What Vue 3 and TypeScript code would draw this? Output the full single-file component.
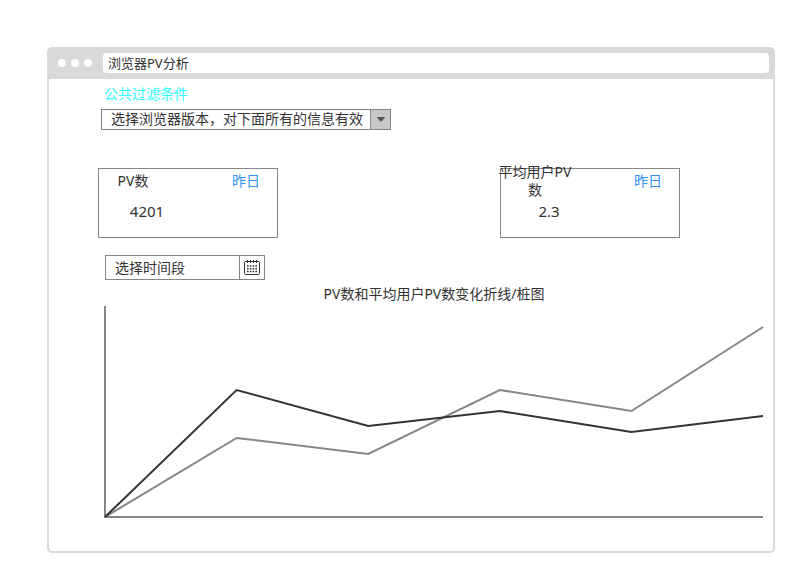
<script setup lang="ts">
import { computed, ref } from 'vue'

interface Metric {
  title: string
  value: string
}

const version = ref('all')
const period = ref('选择时间段')

const metrics: Metric[] = [
  { title: 'PV数', value: '4201' },
  { title: '平均用户PV数', value: '2.3' },
]

const chartWidth = 660
const chartHeight = 212
const baseline = 211

const totalSeries = [0, 127, 91, 106, 85, 101]
const averageSeries = [0, 79, 63, 127, 106, 190]

function toPoints(values: number[]): string {
  const step = (chartWidth - 2) / (values.length - 1)
  return values.map((value, index) => `${1 + index * step},${baseline - value}`).join(' ')
}

const totalPoints = computed(() => toPoints(totalSeries))
const averagePoints = computed(() => toPoints(averageSeries))
</script>

<template>
  <div class="window">
    <header class="bar">
      <span class="dots"><i></i><i></i><i></i></span>
      <h1 class="address">浏览器PV分析</h1>
    </header>

    <main class="content">
      <section class="filter">
        <label class="filter-label" for="version">公共过滤条件</label>
        <div class="select-box">
          <select id="version" v-model="version">
            <option value="all">选择浏览器版本，对下面所有的信息有效</option>
          </select>
          <span class="arrow">
            <svg width="8" height="5" viewBox="0 0 8 5" aria-hidden="true">
              <path d="M0 0.5C0 0 0.5 0 1 0H7C7.5 0 8 0 8 0.5L4.5 4.4Q4 4.8 3.5 4.4Z" fill="#555" />
            </svg>
          </span>
        </div>
      </section>

      <section class="cards">
        <article v-for="metric in metrics" :key="metric.title" class="card">
          <h2 class="card-title">{{ metric.title }}</h2>
          <a class="card-day" href="#">昨日</a>
          <p class="card-value">{{ metric.value }}</p>
        </article>
      </section>

      <div class="date-box">
        <input v-model="period" type="text" aria-label="选择时间段" />
        <button type="button" aria-label="选择时间段">
          <svg width="16" height="16" viewBox="0 0 16 16" aria-hidden="true">
            <rect x="0.5" y="1.5" width="15" height="13" rx="1" fill="none" stroke="#333" />
            <path d="M3.5 0V3M6.5 0V3M9.5 0V3M12.5 0V3" stroke="#333" />
            <path
              d="M3 6H13M3 8.75H13M3 11.5H13"
              stroke="#333"
              stroke-width="1.5"
              stroke-dasharray="1.6 1.2"
            />
          </svg>
        </button>
      </div>

      <figure class="chart">
        <figcaption>PV数和平均用户PV数变化折线/桩图</figcaption>
        <svg :viewBox="`0 0 ${chartWidth} ${chartHeight}`" preserveAspectRatio="none">
          <path class="axis" :d="`M1 0V${baseline}H${chartWidth - 1}`" />
          <polyline class="line average" :points="averagePoints" />
          <polyline class="line total" :points="totalPoints" />
        </svg>
      </figure>
    </main>
  </div>
</template>

<style>
body {
  margin: 0;
  background: #fff;
}
</style>

<style scoped>
* {
  box-sizing: border-box;
}

.window {
  margin: 47px 31px 31px 47px;
  border: 2px solid #d9d9d9;
  border-radius: 5px;
  color: #333;
  font: 14px/18px "Noto Sans", "Noto Sans CJK SC", sans-serif;
}

.bar {
  display: flex;
  align-items: center;
  height: 30px;
  padding: 0 4px 2px 9px;
  background: #d9d9d9;
}

.dots {
  display: flex;
  gap: 5px;
  margin-right: 11px;
}

.dots i {
  width: 8px;
  height: 8px;
  border-radius: 50%;
  background: #fff;
}

.address {
  flex: 1;
  height: 20px;
  margin: 0;
  padding-left: 5px;
  border-radius: 4px;
  background: #fff;
  font-size: 13px;
  font-weight: 400;
  line-height: 20px;
}

.content {
  padding: 6px 9px 33px 49px;
}

.filter {
  display: flex;
  flex-direction: column;
  align-items: flex-start;
  gap: 6px;
  padding-left: 3px;
}

.filter-label {
  padding-left: 3px;
  color: #3ff;
}

.select-box {
  display: grid;
  grid-template-columns: 1fr 20px;
  width: 290px;
  height: 21px;
  border: 1px solid #868686;
}

.select-box select {
  grid-area: 1 / 1 / 2 / 3;
  width: 100%;
  height: 18px;
  padding: 0 20px 0 9px;
  border: 0;
  background: none;
  color: inherit;
  font: inherit;
  line-height: 18px;
  appearance: none;
}

.arrow {
  grid-area: 1 / 2;
  display: flex;
  align-items: center;
  justify-content: center;
  border-left: 1px solid #868686;
  background: #c8c8c8;
  pointer-events: none;
}

.cards {
  display: flex;
  justify-content: space-between;
  margin-top: 38px;
  padding-right: 84px;
}

.card {
  display: grid;
  grid-template-columns: 72px 1fr;
  grid-template-rows: 24px 36px;
  align-items: center;
  width: 180px;
  height: 70px;
  border: 1px solid #868686;
}

.card-title {
  width: 76px;
  margin: 0 0 0 -4px;
  font-size: 14px;
  font-weight: 400;
  text-align: center;
}

.card-day {
  padding-left: 61px;
  color: #2e92f7;
  text-decoration: none;
}

.card-value {
  width: 96px;
  margin: 0;
  font-size: 15px;
  text-align: center;
}

.date-box {
  display: flex;
  width: 160px;
  height: 25px;
  margin: 17px 0 0 7px;
  border: 1px solid #868686;
}

.date-box input {
  flex: 1;
  min-width: 0;
  padding: 0 0 0 9px;
  border: 0;
  background: none;
  color: inherit;
  font: inherit;
}

.date-box button {
  display: flex;
  align-items: center;
  justify-content: center;
  width: 25px;
  padding: 0;
  border: 0;
  border-left: 1px solid #868686;
  background: none;
}

.chart {
  margin: 5px 0 0 6px;
}

.chart figcaption {
  text-align: center;
}

.chart svg {
  display: block;
  width: 100%;
  height: 212px;
  margin-top: 3px;
}

.axis,
.line {
  fill: none;
  stroke-width: 2;
  vector-effect: non-scaling-stroke;
}

.axis,
.average {
  stroke: #868686;
}

.total {
  stroke: #333;
}
</style>
